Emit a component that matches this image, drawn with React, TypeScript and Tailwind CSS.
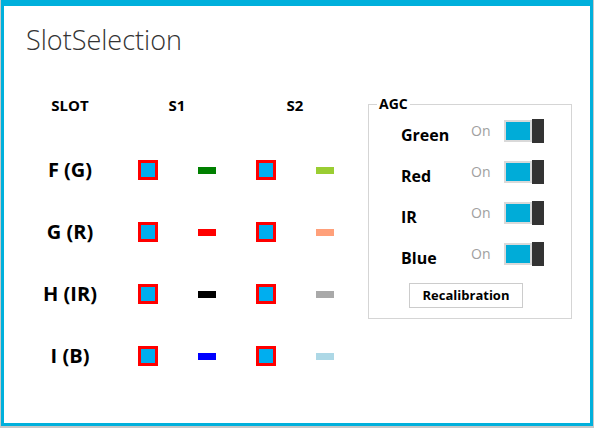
import React from "react";

const slots = [
  { label: "F (G)", s1: "bg-[#008000]", s2: "bg-[#9acd32]" },
  { label: "G (R)", s1: "bg-[#ff0000]", s2: "bg-[#ffa07a]" },
  { label: "H (IR)", s1: "bg-[#000000]", s2: "bg-[#a9a9a9]" },
  { label: "I (B)", s1: "bg-[#0000ff]", s2: "bg-[#add8e6]" },
];

const agc = ["Green", "Red", "IR", "Blue"];

function Check() {
  return (
    <div className="flex justify-center">
      <div className="h-[20px] w-[20px] border-[3px] border-[#ff0000] bg-[#00aeef]" />
    </div>
  );
}

function Dash({ color }: { color: string }) {
  return (
    <div className="flex justify-center">
      <div className={`h-[7px] w-[18px] ${color}`} />
    </div>
  );
}

function Toggle() {
  return (
    <div className="flex h-[24px] w-[40px] items-stretch">
      <div className="my-[1px] flex-1 border-[2px] border-[#d9d9d9] bg-[#00acd8]" />
      <div className="w-[12px] bg-[#333333]" />
    </div>
  );
}

export default function App() {
  return (
    <div className="h-[428px] w-[594px] bg-[#c8c8c8] pr-[1px] pb-[2px] pl-[1px] font-['Open_Sans',sans-serif]">
      <div className="flex h-full w-full flex-col border-x-[3px] border-t-[6px] border-b-[3px] border-[#00b0dc] bg-white">
        <h1 className="mt-[17px] ml-[22px] text-[27px] leading-[34px] font-light text-[#333]">
          SlotSelection
        </h1>

        <div className="mt-[33px] flex items-start">
          {/* slot table */}
          <div className="ml-[18px] grid grid-cols-[96px_59px_59px_59px_59px] text-black">
            <div className="flex h-[30px] items-center justify-center text-[15px] font-bold">SLOT</div>
            <div className="col-span-2 flex h-[30px] items-center justify-center text-[15px] font-bold">S1</div>
            <div className="col-span-2 flex h-[30px] items-center justify-center text-[15px] font-bold">S2</div>
            {slots.map((s, i) => (
              <React.Fragment key={s.label}>
                <div className={`flex h-[62px] items-center justify-center text-[20px] font-bold ${i === 0 ? "mt-[19px]" : ""}`}>
                  {s.label}
                </div>
                <div className={`flex h-[62px] items-center justify-center ${i === 0 ? "mt-[19px]" : ""}`}>
                  <Check />
                </div>
                <div className={`flex h-[62px] items-center justify-center ${i === 0 ? "mt-[19px]" : ""}`}>
                  <Dash color={s.s1} />
                </div>
                <div className={`flex h-[62px] items-center justify-center ${i === 0 ? "mt-[19px]" : ""}`}>
                  <Check />
                </div>
                <div className={`flex h-[62px] items-center justify-center ${i === 0 ? "mt-[19px]" : ""}`}>
                  <Dash color={s.s2} />
                </div>
              </React.Fragment>
            ))}
          </div>

          {/* AGC group */}
          <fieldset className="mt-[7px] ml-[14px] h-[222px] w-[204px] border border-[#d5d5d5] px-0 pt-0">
            <legend className="ml-[8px] px-[2px] text-[14px] leading-[14px] font-bold text-black">AGC</legend>
            <div className="-mt-[1px] flex flex-col">
              {agc.map((a) => (
                <div key={a} className="flex h-[41px] items-center">
                  <div className="mt-[8px] ml-[32px] w-[70px] text-[16px] font-bold text-black">{a}</div>
                  <div className="text-[14px] text-[#a0a0a0]">On</div>
                  <div className="ml-[14px]">
                    <Toggle />
                  </div>
                </div>
              ))}
              <div className="mt-[9px] ml-[40px] flex">
                <button className="h-[25px] w-[114px] border border-[#cccccc] bg-white text-[13px] font-bold text-black">
                  Recalibration
                </button>
              </div>
            </div>
          </fieldset>
        </div>
      </div>
    </div>
  );
}
